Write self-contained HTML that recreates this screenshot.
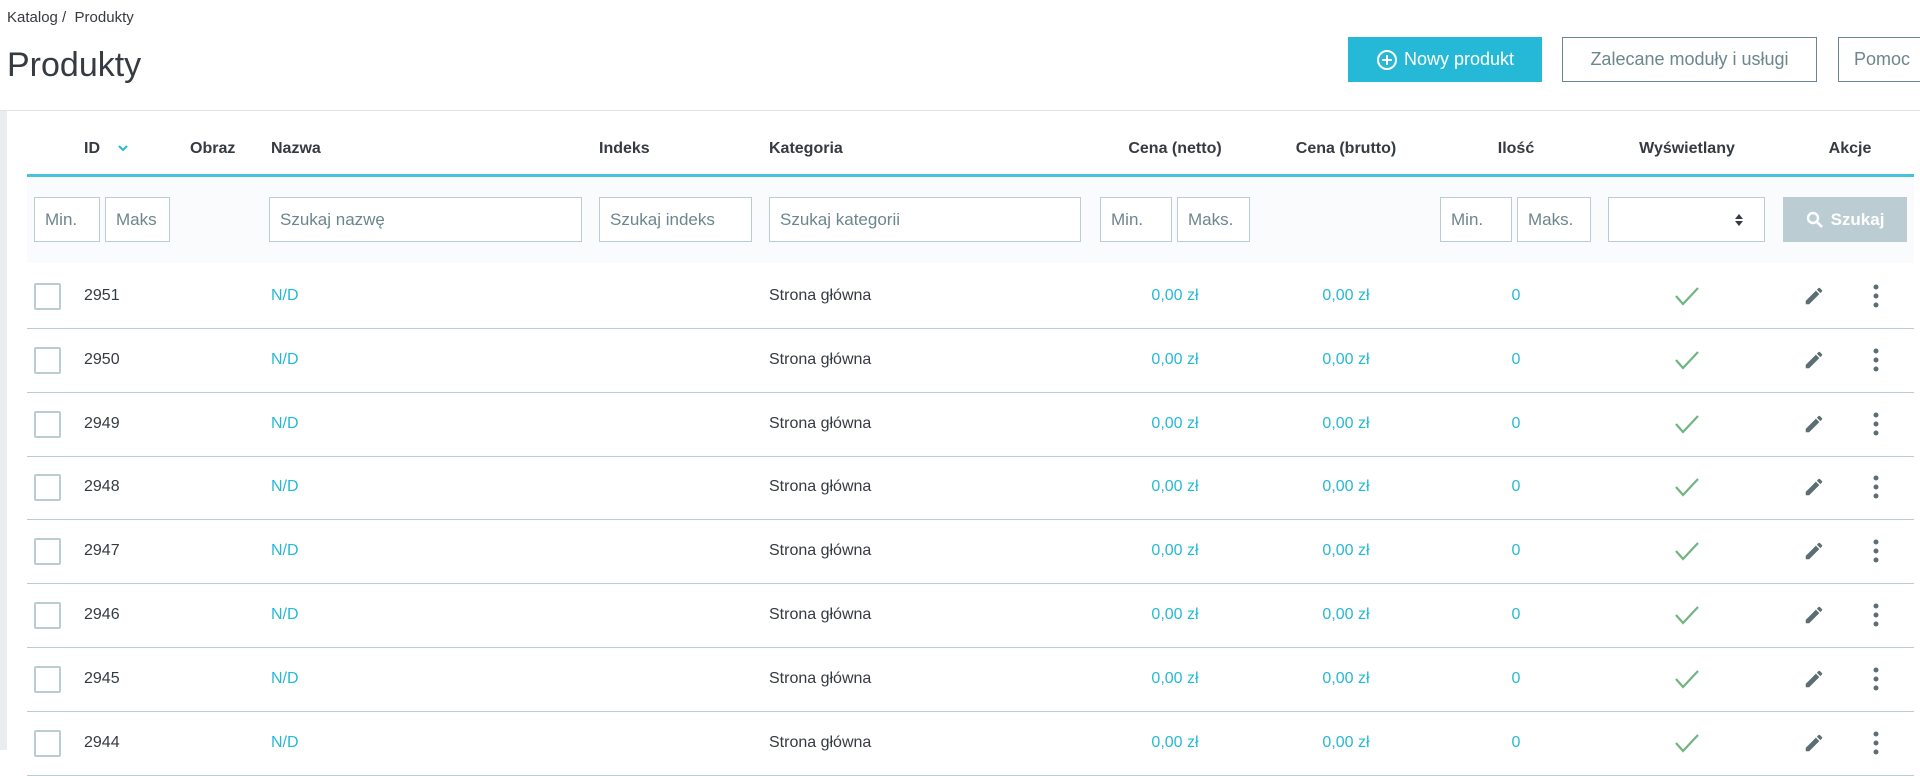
<!DOCTYPE html>
<html><head><meta charset="utf-8"><style>
*{box-sizing:border-box;margin:0;padding:0}
body{width:1920px;height:750px;overflow:hidden;background:#fff;font-family:"Liberation Sans",sans-serif;color:#363a41;position:relative}
.a{position:absolute;white-space:nowrap}
.bc{left:7px;top:9px;font-size:15px}
.h1{left:7px;top:46px;font-size:34px;font-weight:normal}
.btn{position:absolute;top:37px;height:45px;font-size:18px;display:flex;align-items:center;justify-content:center;border:1px solid #6c868e;color:#6c868e;background:#fff}
.sep{position:absolute;left:0;top:110px;width:1920px;height:1px;background:#dfe3e6}
.lb{position:absolute;left:0;top:111px;width:7px;height:639px;background:#eaedef}
.th{position:absolute;top:140px;font-size:16px;font-weight:bold;color:#363a41}
.tl{position:absolute;left:27px;top:174px;width:1887px;height:3px;background:#25b9d7;opacity:.85}
.fb{position:absolute;left:27px;top:177px;width:1887px;height:86px;background:#fafbfc}
.in{position:absolute;top:197px;height:45px;border:1px solid #bbcdd2;background:#fff;color:#6c868e;font-size:17px;padding-left:10px;display:flex;align-items:center}
.row{position:absolute;left:27px;width:1887px;height:64px;border-bottom:1px solid #bbcdd2}
.c{position:absolute;top:22px;font-size:16px}
.t{color:#25b9d7}
.cb{position:absolute;left:7px;top:18px;width:27px;height:27px;border:2px solid #bbcdd2;border-radius:2px;background:#fff}
.ctr{transform:translateX(-50%)}
</style></head><body>
<div class="a bc">Katalog /&nbsp; Produkty</div>
<div class="a h1">Produkty</div>
<div class="btn" style="left:1348px;width:194px;background:#25b9d7;border-color:#25b9d7;color:#fff">
<svg width="22" height="22" viewBox="0 0 22 22" style="margin-right:6px"><circle cx="11" cy="11" r="9" fill="none" stroke="#fff" stroke-width="2"/><path d="M11 6v10M6 11h10" stroke="#fff" stroke-width="2"/></svg>Nowy produkt</div>
<div class="btn" style="left:1562px;width:255px">Zalecane moduły i usługi</div>
<div class="btn" style="left:1838px;width:100px;justify-content:flex-start;padding-left:15px">Pomoc</div>
<div class="sep"></div><div class="lb"></div>
<div class="th" style="left:84px">ID</div>
<svg class="a" style="left:117px;top:143px" width="12" height="10" viewBox="0 0 12 10"><path d="M2 3l4 4 4-4" fill="none" stroke="#25b9d7" stroke-width="2"/></svg>
<div class="th" style="left:190px">Obraz</div>
<div class="th" style="left:271px">Nazwa</div>
<div class="th" style="left:599px">Indeks</div>
<div class="th" style="left:769px">Kategoria</div>
<div class="th ctr" style="left:1175px">Cena (netto)</div>
<div class="th ctr" style="left:1346px">Cena (brutto)</div>
<div class="th ctr" style="left:1516px">Ilość</div>
<div class="th ctr" style="left:1687px">Wyświetlany</div>
<div class="th ctr" style="left:1850px">Akcje</div>
<div class="tl"></div><div class="fb"></div>
<div class="in" style="left:34px;width:66px">Min.</div>
<div class="in" style="left:105px;width:65px">Maks</div>
<div class="in" style="left:269px;width:313px">Szukaj nazwę</div>
<div class="in" style="left:599px;width:153px">Szukaj indeks</div>
<div class="in" style="left:769px;width:312px">Szukaj kategorii</div>
<div class="in" style="left:1100px;width:72px">Min.</div>
<div class="in" style="left:1177px;width:73px">Maks.</div>
<div class="in" style="left:1440px;width:72px">Min.</div>
<div class="in" style="left:1517px;width:74px">Maks.</div>
<div class="in" style="left:1608px;width:157px"><svg style="position:absolute;right:20px;top:15px" width="10" height="14" viewBox="0 0 10 14"><path d="M1 6l4-5 4 5zM1 8l4 5 4-5z" fill="#363a41"/></svg></div>
<div class="in" style="left:1783px;width:124px;background:#bbcdd2;border-color:#bbcdd2;color:#fff;font-weight:bold;justify-content:center;padding:0"><svg width="18" height="18" viewBox="0 0 18 18" style="margin-right:7px"><circle cx="7" cy="7" r="5" fill="none" stroke="#fff" stroke-width="2.4"/><path d="M11 11l5 5" stroke="#fff" stroke-width="2.6"/></svg>Szukaj</div>
<div id="rows"></div>
<script>
var h='';var ids=[2951,2950,2949,2948,2947,2946,2945,2944];
ids.forEach(function(id,i){var top=265+i*63.8;
h+='<div class="row" style="top:'+top+'px"><div class="cb"></div>'+
'<div class="c" style="left:57px">'+id+'</div>'+
'<div class="c t" style="left:244px">N/D</div>'+
'<div class="c" style="left:742px">Strona główna</div>'+
'<div class="c t ctr" style="left:1148px">0,00 zł</div>'+
'<div class="c t ctr" style="left:1319px">0,00 zł</div>'+
'<div class="c t ctr" style="left:1489px">0</div>'+
'<svg style="position:absolute;left:1647px;top:20px" width="26" height="22" viewBox="0 0 26 22"><path d="M2 11l7 8L24 3" fill="none" stroke="#70b580" stroke-width="2.2"/></svg>'+
'<svg style="position:absolute;left:1776px;top:20px" width="22" height="22" viewBox="0 0 24 24"><path d="M3 17.25V21h3.75L17.81 9.94l-3.75-3.75L3 17.25zM20.71 7.04a1 1 0 000-1.41l-2.34-2.34a1 1 0 00-1.41 0l-1.83 1.83 3.75 3.75 1.83-1.83z" fill="#5c6e74"/></svg>'+
'<svg style="position:absolute;left:1843px;top:18px" width="12" height="26" viewBox="0 0 12 26"><circle cx="6" cy="4" r="2.5" fill="#5c6e74"/><circle cx="6" cy="13" r="2.5" fill="#5c6e74"/><circle cx="6" cy="22" r="2.5" fill="#5c6e74"/></svg>'+
'</div>';});
document.getElementById('rows').innerHTML=h;
</script>
</body></html>
